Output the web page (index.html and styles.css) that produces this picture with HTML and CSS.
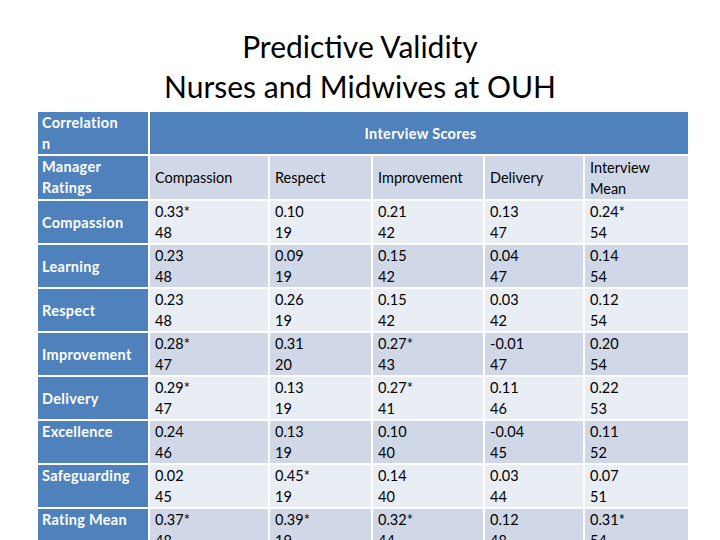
FILE: index.html
```html
<!DOCTYPE html>
<html>
<head>
<meta charset="utf-8">
<link rel="stylesheet" href="styles.css">
</head>
<body>
<h1 class="title">Predictive Validity<br>Nurses and Midwives at OUH</h1>
<table class="grid">
  <colgroup>
    <col class="c0"><col class="c1"><col class="c2"><col class="c3"><col class="c4"><col class="c5">
  </colgroup>
  <tr class="r-head1">
    <td class="lab top">Correlation<br>n</td>
    <td class="span" colspan="5">Interview Scores</td>
  </tr>
  <tr class="r-head2">
    <td class="lab top">Manager<br>Ratings</td>
    <td>Compassion</td>
    <td>Respect</td>
    <td>Improvement</td>
    <td>Delivery</td>
    <td>Interview<br>Mean</td>
  </tr>
  <tr class="light">
    <td class="lab">Compassion</td>
    <td>0.33*<br>48</td><td>0.10<br>19</td><td>0.21<br>42</td><td>0.13<br>47</td><td>0.24*<br>54</td>
  </tr>
  <tr class="dark">
    <td class="lab">Learning</td>
    <td>0.23<br>48</td><td>0.09<br>19</td><td>0.15<br>42</td><td>0.04<br>47</td><td>0.14<br>54</td>
  </tr>
  <tr class="light">
    <td class="lab">Respect</td>
    <td>0.23<br>48</td><td>0.26<br>19</td><td>0.15<br>42</td><td>0.03<br>42</td><td>0.12<br>54</td>
  </tr>
  <tr class="dark">
    <td class="lab">Improvement</td>
    <td>0.28*<br>47</td><td>0.31<br>20</td><td>0.27*<br>43</td><td>-0.01<br>47</td><td>0.20<br>54</td>
  </tr>
  <tr class="light">
    <td class="lab">Delivery</td>
    <td>0.29*<br>47</td><td>0.13<br>19</td><td>0.27*<br>41</td><td>0.11<br>46</td><td>0.22<br>53</td>
  </tr>
  <tr class="dark">
    <td class="lab top">Excellence</td>
    <td>0.24<br>46</td><td>0.13<br>19</td><td>0.10<br>40</td><td>-0.04<br>45</td><td>0.11<br>52</td>
  </tr>
  <tr class="light">
    <td class="lab top">Safeguarding</td>
    <td>0.02<br>45</td><td>0.45*<br>19</td><td>0.14<br>40</td><td>0.03<br>44</td><td>0.07<br>51</td>
  </tr>
  <tr class="dark">
    <td class="lab top">Rating Mean</td>
    <td>0.37*<br>48</td><td>0.39*<br>19</td><td>0.32*<br>44</td><td>0.12<br>48</td><td>0.31*<br>54</td>
  </tr>
</table>
</body>
</html>
```
FILE: styles.css
```css
html, body {
  margin: 0;
  padding: 0;
  background: #ffffff;
}
body {
  font-family: Lato, "Open Sans", sans-serif;
  color: #000;
}
.title {
  margin: 26px 0 0 0;
  font-weight: normal;
  font-size: 30px;
  line-height: 40px;
  text-align: center;
  color: #000;
}
.grid {
  margin: 4px 0 0 36px;
  border-collapse: separate;
  border-spacing: 2px;
  table-layout: fixed;
  width: 654px;
  font-size: 14.5px;
  line-height: 21px;
}
.c0 { width: 110px; }
.c1 { width: 118px; }
.c2 { width: 101px; }
.c3 { width: 110px; }
.c4 { width: 98px; }
.c5 { width: 103px; }
.grid td {
  box-sizing: border-box;
  height: 42px;
  padding: 0 2px 0 5px;
  vertical-align: top;
  white-space: nowrap;
  overflow: hidden;
}
.grid td.lab {
  background: #4f81bd;
  color: #fff;
  font-weight: bold;
  padding-left: 4px;
  vertical-align: middle;
  letter-spacing: 0.3px;
}
.grid td.lab.top {
  vertical-align: top;
}
.r-head1 td {
  background: #4f81bd;
}
.r-head1 td.span {
  color: #fff;
  font-weight: bold;
  text-align: center;
  vertical-align: middle;
  letter-spacing: 0.3px;
}
.r-head2 td {
  height: 43px;
  background: #d0d8e8;
  vertical-align: middle;
}
.light td {
  background: #e9edf4;
}
.dark td {
  background: #d0d8e8;
}
```
